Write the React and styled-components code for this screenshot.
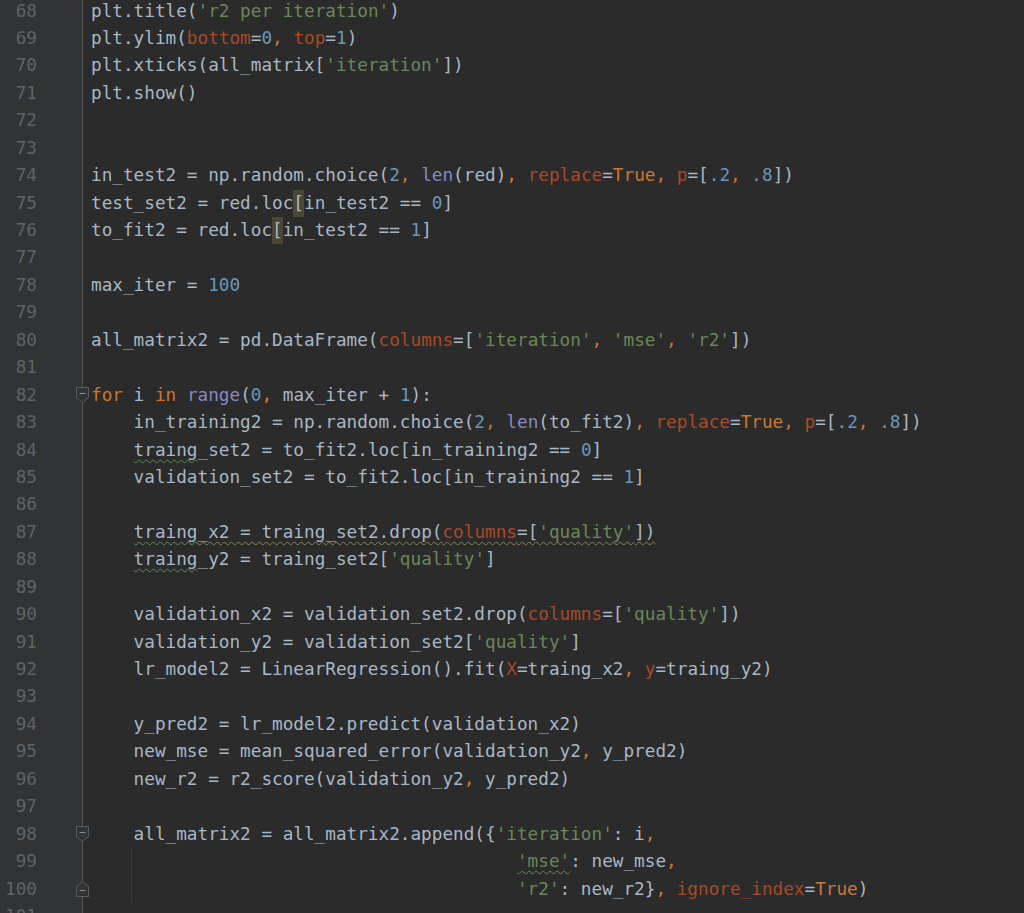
import React from "react";
import styled, { createGlobalStyle, css } from "styled-components";

const ROW = 27.45;
const CHAR = 10.66;

const GlobalStyle = createGlobalStyle`
  html, body {
    margin: 0;
    background: #2b2b2b;
  }
  body {
    overflow: hidden;
  }
`;

const Editor = styled.div`
  height: 913px;
  overflow: hidden;
  background: #2b2b2b;
  font-family: "DejaVu Sans Mono", "Liberation Mono", monospace;
  font-size: 17.7px;
  color: #a9b7c6;
`;

const Lines = styled.div`
  display: flex;
  flex-direction: column;
  margin-top: -2.5px;
`;

const Row = styled.div`
  display: flex;
  height: ${ROW}px;
  line-height: ${ROW}px;
`;

const Gutter = styled.div`
  position: relative;
  flex: none;
  width: 83px;
  box-sizing: border-box;
  background: #313335;
  border-right: 1px solid #555555;
`;

const LineNo = styled.div`
  width: 37px;
  text-align: right;
  color: #606366;
`;

const FoldMark = styled.svg`
  position: absolute;
  left: 76px;
  top: 50%;
  transform: translateY(-50%);
`;

const Code = styled.div`
  position: relative;
  flex: 1;
  padding-left: 8px;
  white-space: pre;
  ${(p) =>
    p.$guide &&
    css`
      &::before {
        content: "";
        position: absolute;
        left: ${8 + 4 * CHAR - 2.5}px;
        top: 0;
        bottom: 0;
        width: 1px;
        background: #3c3c3c;
      }
    `}
`;

const colors = {
  t: "#a9b7c6",
  k: "#cc7832",
  s: "#6a8759",
  n: "#6897bb",
  p: "#aa4926",
  b: "#8888c6",
};

const Tok = styled.span`
  color: ${(p) => colors[p.$kind]};
`;

const Deco = styled.span`
  ${(p) =>
    p.$kind === "typo" &&
    css`
      text-decoration: underline wavy #5f8c57;
      text-decoration-thickness: 1px;
      text-underline-offset: 3px;
      text-decoration-skip-ink: none;
    `}
  ${(p) =>
    p.$kind === "weak" &&
    css`
      text-decoration: underline wavy #8a8550;
      text-decoration-thickness: 1px;
      text-underline-offset: 3px;
      text-decoration-skip-ink: none;
    `}
  ${(p) =>
    p.$kind === "match" &&
    css`
      display: inline-block;
      background: #4a4832;
    `}
`;

const KEYWORDS = new Set(["for", "in", "True"]);
const BUILTINS = new Set(["len", "range"]);

function tokenize(str) {
  const out = [];
  const re = /'[^']*'|[A-Za-z_]\w*|\.?\d+(?:\.\d+)?|./g;
  let m;
  while ((m = re.exec(str))) {
    const w = m[0];
    const next = str[m.index + w.length];
    const after = str[m.index + w.length + 1];
    let kind = "t";
    if (w[0] === "'") kind = "s";
    else if (/^[A-Za-z_]/.test(w)) {
      if (KEYWORDS.has(w)) kind = "k";
      else if (BUILTINS.has(w)) kind = "b";
      else if (next === "=" && after !== "=") kind = "p";
    } else if (/\d/.test(w)) kind = "n";
    else if (w === ",") kind = "k";
    const last = out[out.length - 1];
    if (last && last.kind === kind) last.text += w;
    else out.push({ kind, text: w });
  }
  return out;
}

function renderParts(parts, keyBase = "") {
  return parts.map((part, i) => {
    const key = keyBase + i;
    if (typeof part === "string") {
      return tokenize(part).map((tk, j) => (
        <Tok key={key + "-" + j} $kind={tk.kind}>
          {tk.text}
        </Tok>
      ));
    }
    return (
      <Deco key={key} $kind={part.deco}>
        {renderParts(part.c, key + "-")}
      </Deco>
    );
  });
}

const typo = (...c) => ({ deco: "typo", c });
const weak = (...c) => ({ deco: "weak", c });
const match = (...c) => ({ deco: "match", c });

const IND = "    ";
const ALIGN = " ".repeat(40);

const lines = [
  { n: 68, parts: ["plt.title('r2 per iteration')"] },
  { n: 69, parts: ["plt.ylim(bottom=0, top=1)"] },
  { n: 70, parts: ["plt.xticks(all_matrix['iteration'])"] },
  { n: 71, parts: ["plt.show()"] },
  { n: 72, parts: [] },
  { n: 73, parts: [] },
  { n: 74, parts: ["in_test2 = np.random.choice(2, len(red), replace=True, p=[.2, .8])"] },
  { n: 75, parts: ["test_set2 = red.loc", match("["), "in_test2 == 0]"] },
  { n: 76, parts: ["to_fit2 = red.loc", match("["), "in_test2 == 1]"] },
  { n: 77, parts: [] },
  { n: 78, parts: ["max_iter = 100"] },
  { n: 79, parts: [] },
  { n: 80, parts: ["all_matrix2 = pd.DataFrame(columns=['iteration', 'mse', 'r2'])"] },
  { n: 81, parts: [] },
  { n: 82, fold: "start", parts: ["for i in range(0, max_iter + 1):"] },
  { n: 83, parts: [IND + "in_training2 = np.random.choice(2, len(to_fit2), replace=True, p=[.2, .8])"] },
  { n: 84, parts: [IND, typo("traing"), "_set2 = to_fit2.loc[in_training2 == 0]"] },
  { n: 85, parts: [IND + "validation_set2 = to_fit2.loc[in_training2 == 1]"] },
  { n: 86, parts: [] },
  { n: 87, parts: [IND, typo("traing"), weak("_x2 = traing_set2.drop(columns=['quality'])")] },
  { n: 88, parts: [IND, typo("traing"), "_y2 = traing_set2['quality']"] },
  { n: 89, parts: [] },
  { n: 90, parts: [IND + "validation_x2 = validation_set2.drop(columns=['quality'])"] },
  { n: 91, parts: [IND + "validation_y2 = validation_set2['quality']"] },
  { n: 92, parts: [IND + "lr_model2 = LinearRegression().fit(X=traing_x2, y=traing_y2)"] },
  { n: 93, parts: [] },
  { n: 94, parts: [IND + "y_pred2 = lr_model2.predict(validation_x2)"] },
  { n: 95, parts: [IND + "new_mse = mean_squared_error(validation_y2, y_pred2)"] },
  { n: 96, parts: [IND + "new_r2 = r2_score(validation_y2, y_pred2)"] },
  { n: 97, parts: [] },
  { n: 98, fold: "start", parts: [IND + "all_matrix2 = all_matrix2.append({'iteration': i,"] },
  { n: 99, guide: true, parts: [ALIGN, typo("'mse'"), ": new_mse,"] },
  { n: 100, guide: true, fold: "end", parts: [ALIGN + "'r2': new_r2}, ignore_index=True)"] },
  { n: 101, parts: [] },
];

function Fold({ type }) {
  const shape =
    type === "start"
      ? "M0.5 0.5 H12.5 V10.5 L6.5 15.5 L0.5 10.5 Z"
      : "M0.5 15.5 H12.5 V5.5 L6.5 0.5 L0.5 5.5 Z";
  const minusY = type === "start" ? 6.5 : 9.5;
  return (
    <FoldMark width="13" height="16" viewBox="0 0 13 16">
      <path d={shape} fill="#313335" stroke="#5b5e61" />
      <path d={`M3.5 ${minusY} H9.5`} stroke="#8c8f92" />
    </FoldMark>
  );
}

export default function App() {
  return (
    <>
      <GlobalStyle />
      <Editor>
        <Lines>
          {lines.map((line) => (
            <Row key={line.n}>
              <Gutter>
                <LineNo>{line.n}</LineNo>
                {line.fold && <Fold type={line.fold} />}
              </Gutter>
              <Code $guide={line.guide}>{renderParts(line.parts)}</Code>
            </Row>
          ))}
        </Lines>
      </Editor>
    </>
  );
}
